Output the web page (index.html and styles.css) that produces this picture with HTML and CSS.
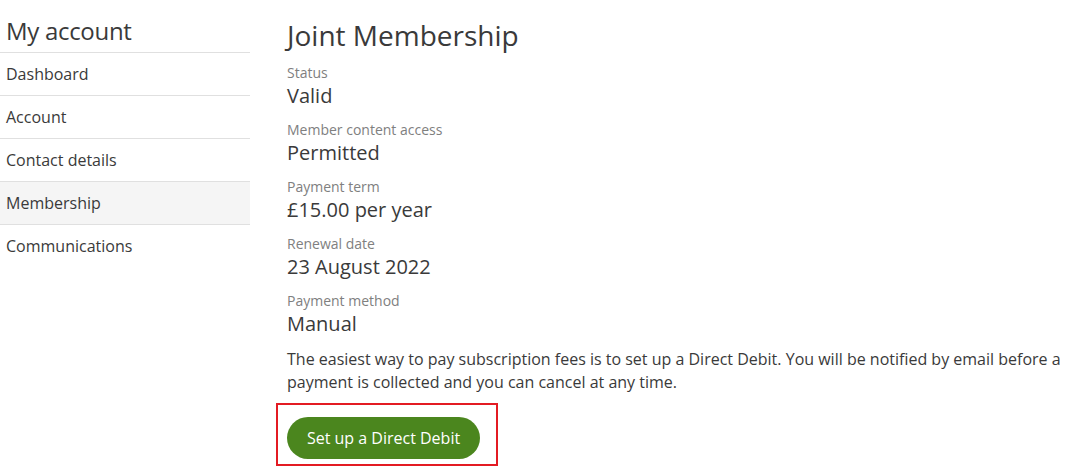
FILE: index.html
```html
<!DOCTYPE html>
<html lang="en">
<head>
<meta charset="utf-8">
<title>Joint Membership</title>
<link rel="stylesheet" href="styles.css">
</head>
<body>
<div class="page">
  <aside class="sidebar">
    <h2 class="side-title">My account</h2>
    <nav class="side-nav">
      <a class="side-link" href="#">Dashboard</a>
      <a class="side-link" href="#">Account</a>
      <a class="side-link" href="#">Contact details</a>
      <a class="side-link active" href="#">Membership</a>
      <a class="side-link" href="#">Communications</a>
    </nav>
  </aside>
  <main class="main">
    <h1 class="title">Joint Membership</h1>
    <dl class="fields">
      <div class="field"><dt>Status</dt><dd>Valid</dd></div>
      <div class="field"><dt>Member content access</dt><dd>Permitted</dd></div>
      <div class="field"><dt>Payment term</dt><dd>£15.00 per year</dd></div>
      <div class="field"><dt>Renewal date</dt><dd>23 August 2022</dd></div>
      <div class="field"><dt>Payment method</dt><dd>Manual</dd></div>
    </dl>
    <p class="note">The easiest way to pay subscription fees is to set up a Direct Debit. You will be notified by email before a payment is collected and you can cancel at any time.</p>
    <div class="highlight">
      <a class="btn" href="#">Set up a Direct Debit</a>
    </div>
  </main>
</div>
</body>
</html>
```
FILE: styles.css
```css
* { box-sizing: border-box; }
html, body { margin: 0; padding: 0; background: #fff; }
body {
  font-family: "Open Sans", "Noto Sans", sans-serif;
  color: #3a3a3a;
  font-size: 16px;
}
.page {
  display: flex;
  gap: 37px;
}
.sidebar {
  width: 250px;
  flex: none;
}
.side-title {
  margin: 0;
  padding: 16px 6px 0;
  height: 53px;
  font-size: 24px;
  font-weight: 400;
  line-height: 30px;
  color: #3a3a3a;
  border-bottom: 1px solid #e0e0e0;
  letter-spacing: -0.3px;
}
.side-nav { display: flex; flex-direction: column; }
.side-link {
  display: block;
  height: 43px;
  line-height: 42px;
  padding: 0 6px;
  border-bottom: 1px solid #e0e0e0;
  color: #3a3a3a;
  text-decoration: none;
  font-size: 16px;
}
.side-link:last-child { border-bottom: none; }
.side-link.active { background: #f5f5f5; }
.main { flex: 1; padding-top: 18px; }
.title {
  margin: 0 0 11px;
  font-size: 28px;
  font-weight: 400;
  line-height: 34px;
}
.fields { margin: 0; }
.field { margin-bottom: 11px; }
.field dt {
  font-size: 14px;
  line-height: 19px;
  color: #808080;
}
.field dd {
  margin: 0;
  font-size: 20px;
  line-height: 27px;
  color: #3a3a3a;
}
.note {
  margin: 0 0 9px;
  font-size: 16px;
  line-height: 23px;
  color: #3a3a3a;
}
.highlight {
  display: inline-block;
  margin-left: -11px;
  padding: 12px 16px 5px 9px;
  border: 2px solid #e31b23;
}
.btn {
  display: inline-block;
  height: 42px;
  width: 193px;
  line-height: 42px;
  text-align: center;
  border-radius: 21px;
  background: #4b861e;
  color: #fff;
  text-decoration: none;
  font-size: 16px;
}
```
